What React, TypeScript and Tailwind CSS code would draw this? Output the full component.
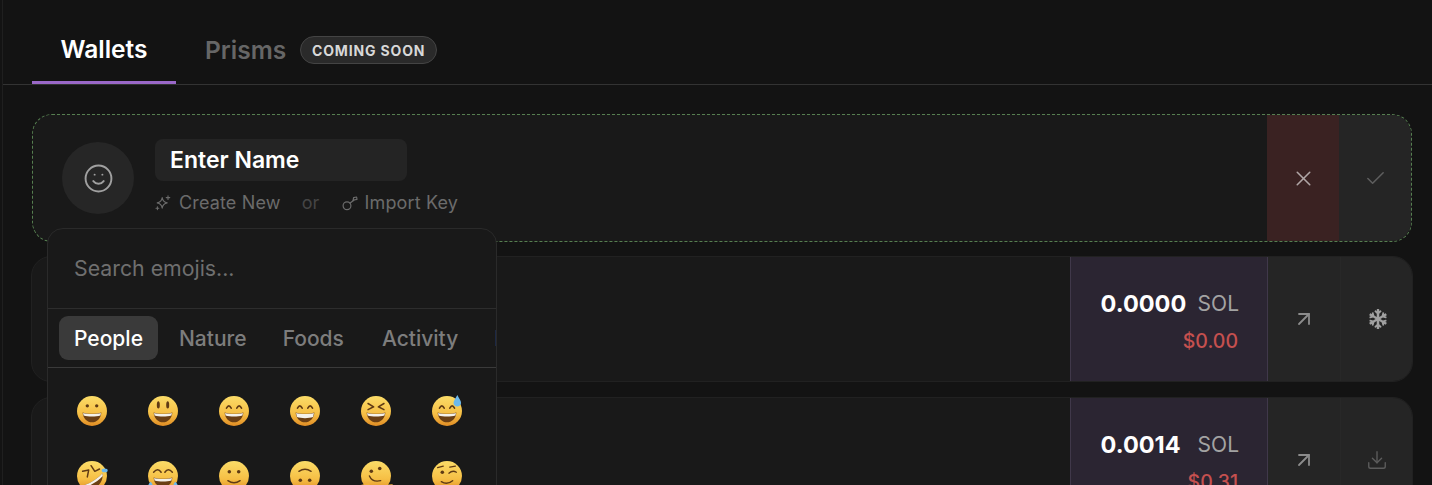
import React from "react";
import { Smile, X, Check, ArrowUpRight, Download } from "lucide-react";
import { FaSnowflake } from "react-icons/fa";

type EmojiKind = "grin" | "smiley" | "smile" | "beam" | "squint" | "sweat" | "rofl" | "joy" | "slight" | "upside" | "melt" | "wink";

function SparkIcon() {
  return (
    <svg viewBox="0 0 16 16" className="h-[16px] w-[16px] shrink-0" fill="none" stroke="currentColor" strokeWidth="1.1" strokeLinejoin="round" strokeLinecap="round">
      <path d="M7.2 2.6 C7.7 6 8.8 7.2 12.2 7.9 C8.8 8.6 7.7 9.8 7.2 13.2 C6.7 9.8 5.6 8.6 2.2 7.9 C5.6 7.2 6.7 6 7.2 2.6Z" />
      <path d="M13 0.8 V4.4 M11.2 2.6 H14.8" />
      <path d="M2.4 11.8 V14.6 M1 13.2 H3.8" />
    </svg>
  );
}

function KeyIcon() {
  return (
    <svg viewBox="0 0 16 16" className="h-[16px] w-[16px] shrink-0" fill="none" stroke="currentColor" strokeWidth="1.2" strokeLinecap="round" strokeLinejoin="round">
      <circle cx="5" cy="10.8" r="3.9" />
      <path d="M7.9 8.2 L12 5" />
      <path d="M11 5.8 L11.6 2.6 L14.6 2 L15 4.4 L12 5" />
    </svg>
  );
}

function Mouth({ teeth = false }: { teeth?: boolean }) {
  return (
    <g>
      <path d="M6 17.5 C11 19.5 21 19.5 26 17.5 C25.6 24 21 28 16 28 C11 28 6.4 24 6 17.5Z" fill="#6b3f14" />
      <path d={teeth ? "M6.5 18 C11 19.6 21 19.6 25.5 18 L24.6 22.4 C20 24 12 24 7.4 22.4Z" : "M6.5 18 C11 19.6 21 19.6 25.5 18 L25 20.8 C20 22.2 12 22.2 7 20.8Z"} fill="#f4f1ea" />
    </g>
  );
}

function ArchEyes() {
  return (
    <path d="M8 13 Q10.5 8 13 13 M19 13 Q21.5 8 24 13" fill="none" stroke="#5f3a14" strokeWidth="1.7" strokeLinecap="round" />
  );
}

function Emoji({ kind, id }: { kind: EmojiKind; id: string }) {
  return (
    <svg viewBox="0 0 32 32" className="h-[30px] w-[30px] shrink-0 overflow-visible">
      <defs>
        <linearGradient id={id} x1="0" y1="0" x2="0" y2="1">
          <stop offset="0%" stopColor="#fbdc68" />
          <stop offset="60%" stopColor="#f6bf45" />
          <stop offset="100%" stopColor="#e08c24" />
        </linearGradient>
      </defs>
      <circle cx="16" cy="16" r="16" fill={`url(#${id})`} />
      {kind === "grin" && (<g><circle cx="11" cy="10.5" r="1.8" fill="#5f3a14" /><circle cx="21" cy="10.5" r="1.8" fill="#5f3a14" /><Mouth /></g>)}
      {kind === "smiley" && (<g><ellipse cx="11" cy="9.5" rx="1.6" ry="3.8" fill="#5f3a14" /><ellipse cx="21" cy="9.5" rx="1.6" ry="3.8" fill="#5f3a14" /><Mouth /></g>)}
      {kind === "smile" && (<g><ArchEyes /><Mouth /></g>)}
      {kind === "beam" && (<g><ArchEyes /><Mouth teeth /></g>)}
      {kind === "squint" && (<g><path d="M7.5 8 L13.5 11.5 L7.5 14.5 M24.5 8 L18.5 11.5 L24.5 14.5" fill="none" stroke="#5f3a14" strokeWidth="1.6" strokeLinecap="round" strokeLinejoin="round" /><Mouth /></g>)}
      {kind === "sweat" && (<g><ArchEyes /><Mouth /><path d="M27 -1 C25 3 23 5 23 7.5 C23 9.8 25 11.2 27 11.2 C29 11.2 31 9.8 31 7.5 C31 5 29 3 27 -1Z" fill="#6db9ec" /></g>)}
      {kind === "rofl" && (<g><path d="M6 11 L12.5 9.5 L11 17 M15 5 L19 11 L24 8.5" fill="none" stroke="#5f3a14" strokeWidth="1.6" strokeLinecap="round" strokeLinejoin="round" /><path d="M7 26 C14 24 23 18 27 13 C29 21 22 30 13 30 C10 30 8 28 7 26Z" fill="#6b3f14" /><path d="M7 26 C14 24 23 18 27 13 L27.5 16 C23 21 15 26 9 28Z" fill="#f4f1ea" /><ellipse cx="29.5" cy="10" rx="3.2" ry="2" fill="#6db9ec" /><ellipse cx="4" cy="30" rx="3" ry="1.8" fill="#6db9ec" /></g>)}
      {kind === "joy" && (<g><path d="M6 12 Q10.5 6.5 14 12 M18 12 Q21.5 6.5 26 12" fill="none" stroke="#5f3a14" strokeWidth="1.6" strokeLinecap="round" /><Mouth /><path d="M-1 31 Q0 24 3 22 Q6 26 5 29 Q3 33 -1 31Z M33 31 Q32 24 29 22 Q26 26 27 29 Q29 33 33 31Z" fill="#6db9ec" /></g>)}
      {kind === "slight" && (<g><circle cx="11" cy="11.5" r="1.9" fill="#5f3a14" /><circle cx="21" cy="11.5" r="1.9" fill="#5f3a14" /><path d="M9.5 21 Q16 25.5 22.5 21" fill="none" stroke="#5f3a14" strokeWidth="1.5" strokeLinecap="round" /></g>)}
      {kind === "upside" && (<g><circle cx="11" cy="20.5" r="1.9" fill="#5f3a14" /><circle cx="21" cy="20.5" r="1.9" fill="#5f3a14" /><path d="M9.5 11 Q16 6.5 22.5 11" fill="none" stroke="#5f3a14" strokeWidth="1.5" strokeLinecap="round" /></g>)}
      {kind === "melt" && (<g><circle cx="11" cy="11" r="1.9" fill="#5f3a14" /><circle cx="20" cy="8" r="1.9" fill="#5f3a14" /><path d="M9 16 Q12 23 21 21" fill="none" stroke="#5f3a14" strokeWidth="1.5" strokeLinecap="round" /><path d="M-1 27 L8 25 M22 27 L33 26" stroke="#f0b03a" strokeWidth="2.4" strokeLinecap="round" /></g>)}
      {kind === "wink" && (<g><circle cx="11" cy="12" r="1.9" fill="#5f3a14" /><path d="M18 13 Q22 9.5 26 12 M19 6.5 L25 5.5 M6 7 L12 5.5" fill="none" stroke="#5f3a14" strokeWidth="1.4" strokeLinecap="round" /><path d="M10 22 Q16 26 22 21" fill="none" stroke="#5f3a14" strokeWidth="1.5" strokeLinecap="round" /></g>)}
    </svg>
  );
}

const emojis: EmojiKind[] = ["grin", "smiley", "smile", "beam", "squint", "sweat", "rofl", "joy", "slight", "upside", "melt", "wink"];

function ActionCell({ children, first = false }: { children: React.ReactNode; first?: boolean }) {
  return (
    <div className={`flex w-[72px] items-center justify-center bg-[#252525] ${first ? "" : "border-l border-[#282828]"}`}>
      {children}
    </div>
  );
}

function WalletCard({ balance, usd, last, className }: { balance: string; usd: string; last: React.ReactNode; className: string }) {
  return (
    <div className={`flex h-[126px] shrink-0 justify-end overflow-hidden rounded-[20px] border border-[#212121] bg-[#191919] ${className}`}>
      <div className="flex w-[198px] flex-col items-end border-x border-[#40384a] bg-[#2b2532] pt-[31px] pr-[28px]">
        <div className="flex items-center gap-[13px] leading-[32px]">
          <span className="w-[84px] text-[23.5px] font-bold text-white">{balance}</span>
          <span className="text-[21px] text-[#a3a3a3]">SOL</span>
        </div>
        <div className="mt-[9px] pr-px text-[19.5px] font-medium leading-[24px] text-[#c5504f]">{usd}</div>
      </div>
      <ActionCell first>
        <ArrowUpRight size={24} strokeWidth={1.8} className="text-[#8c8c8c]" />
      </ActionCell>
      {last}
    </div>
  );
}

export default function App() {
  return (
    <div className="relative h-[485px] w-[1432px] overflow-hidden bg-[#131313] font-['Inter',sans-serif]">
      <div className="ml-[2px] h-full border-l border-[#1f1f1f]">
        <div className="flex h-[85px] items-end border-b border-[#333333] pl-[29px]">
          <div className="flex h-[84px] w-[144px] items-center justify-center border-b-[3px] border-[#9a68c8] pt-[17px] text-[24.5px] font-semibold text-white">
            Wallets
          </div>
          <div className="ml-[29px] flex h-[84px] items-center pt-[16px]">
            <span className="text-[24.5px] font-semibold text-[#666666]">Prisms</span>
            <span className="ml-[14px] flex h-[28px] w-[137px] items-center justify-center rounded-full border border-[#444444] bg-[#2a2a2a] text-[14px] font-bold tracking-[0.85px] text-[#d8d8d8]">
              COMING SOON
            </span>
          </div>
        </div>

        <div className="flex flex-col pl-[28px] pr-[19px] pt-[29px]">
          <div className="mx-px flex h-[128px] shrink-0 overflow-hidden rounded-[20px] border border-dashed border-[#567f50] bg-[#191919]">
            <div className="flex flex-1 pl-[29px]">
              <div className="mt-[27px] flex h-[72px] w-[72px] items-center justify-center rounded-full bg-[#262626]">
                <Smile size={31} strokeWidth={1.5} className="text-[#a0a0a0]" />
              </div>
              <div className="ml-[21px] mt-[24px]">
                <div className="flex h-[42px] w-[252px] items-center rounded-[8px] bg-[#242424] pl-[15px] text-[23px] font-semibold text-white">
                  Enter Name
                </div>
                <div className="mt-[11px] flex items-center text-[18px] leading-[22px] tracking-[0.15px] text-[#6b6b6b]">
                  <SparkIcon />
                  <span className="ml-[8px]">Create New</span>
                  <span className="ml-[21px] text-[#454545]">or</span>
                  <span className="ml-[22px] flex">
                    <KeyIcon />
                  </span>
                  <span className="ml-[7px]">Import Key</span>
                </div>
              </div>
            </div>
            <div className="flex w-[72px] items-center justify-center bg-[#3a2222]">
              <X size={25} strokeWidth={1.5} className="text-[#b0a6a6]" />
            </div>
            <div className="flex w-[72px] items-center justify-center bg-[#252525]">
              <Check size={23} strokeWidth={1.6} className="text-[#5e5e5e]" />
            </div>
          </div>

          <WalletCard
            className="mt-[14px]"
            balance="0.0000"
            usd="$0.00"
            last={
              <ActionCell>
                <FaSnowflake size={20} className="ml-[2px] text-[#a0a0a0]" />
              </ActionCell>
            }
          />
          <WalletCard
            className="mt-[15px]"
            balance="0.0014"
            usd="$0.31"
            last={
              <ActionCell>
                <Download size={22} strokeWidth={1.5} className="text-[#5c5c5c]" />
              </ActionCell>
            }
          />
        </div>
      </div>

      <div className="absolute left-[47px] top-[228px] w-[450px] overflow-hidden rounded-[16px] border border-[#2a2a2a] bg-[#191919]">
        <div className="flex h-[80px] items-center border-b border-[#2d2d2d] pl-[26px] text-[21.3px] text-[#6f6f6f]">
          Search emojis...
        </div>
        <div className="flex h-[59px] items-center gap-[6px] overflow-hidden border-b border-[#3a3a3a] pl-[11px] text-[21px] font-medium text-[#7d7d7d]">
          <span className="flex h-[44px] shrink-0 items-center rounded-[9px] bg-[#3a3a3a] px-[15px] pt-px text-white">People</span>
          <span className="shrink-0 px-[15px] pt-px">Nature</span>
          <span className="shrink-0 px-[15px] pt-px">Foods</span>
          <span className="ml-[2px] shrink-0 px-[15px] pt-px">Activity</span>
          <span className="shrink-0 px-[15px] pt-px">Places</span>
        </div>
        <div className="grid grid-cols-[repeat(6,30px)] gap-x-[41px] gap-y-[35px] pl-[29px] pt-[28px]">
          {emojis.map((k, i) => (
            <Emoji key={k} kind={k} id={`emoji-grad-${i}`} />
          ))}
        </div>
        <div className="h-[60px]" />
      </div>
    </div>
  );
}
